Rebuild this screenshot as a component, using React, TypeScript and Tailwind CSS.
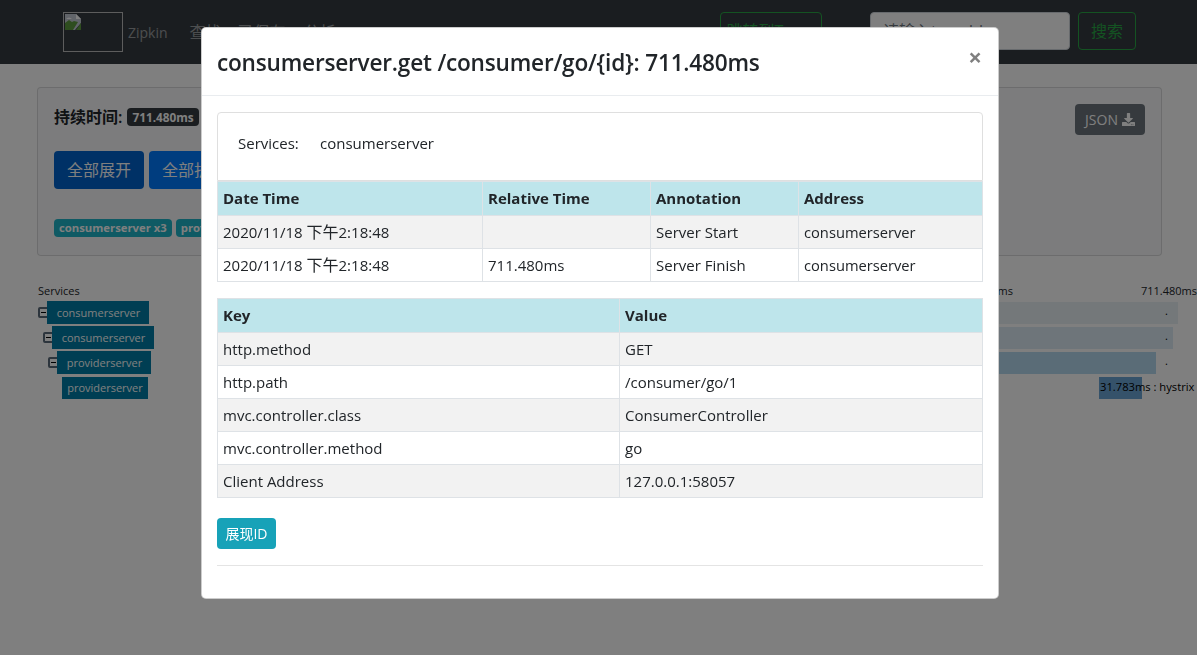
import React from 'react';
import { FaDownload } from 'react-icons/fa';

const font = "font-['Open_Sans','Noto_Sans_CJK_SC',sans-serif]";

const spanRows = [
  { name: 'consumerserver', indent: 'ml-[38px]', labelW: 'w-[102px]', barColor: 'bg-[#e8f0f5]', mr: 'mr-[19px]', dot: 'right-[10px]' },
  { name: 'consumerserver', indent: 'ml-[43px]', labelW: 'w-[102px]', barColor: 'bg-[#dceaf4]', mr: 'mr-[24px]', dot: 'right-[5px]' },
  { name: 'providerserver', indent: 'ml-[48px]', labelW: 'w-[94px]', barColor: 'bg-[#b4d8ee]', mr: 'mr-[41px]', dot: '-right-[12px]' },
];

const eventRows = [
  ['2020/11/18', '下午', '2:18:48', '', 'Server Start', 'consumerserver'],
  ['2020/11/18', '下午', '2:18:48', '711.480ms', 'Server Finish', 'consumerserver'],
];

const tagRows = [
  ['http.method', 'GET'],
  ['http.path', '/consumer/go/1'],
  ['mvc.controller.class', 'ConsumerController'],
  ['mvc.controller.method', 'go'],
  ['Client Address', '127.0.0.1:58057'],
];

const BrokenImage = () => (
  <svg width="16" height="16" viewBox="0 0 16 16" className="block">
    <path d="M0 0h11l5 5v4l-6 7H0z" fill="#c3c9d3" />
    <path d="M0 9l4-3 3 2 2-1 4 1-5 8H0z" fill="#5d9a3f" />
    <path d="M1 5c2-2 4-2 6 0z" fill="#fff" />
    <path d="M11 0v5h5z" fill="#fff" />
    <path d="M16 9v7h-5z" fill="#5d9a3f" />
  </svg>
);

const Toggle = () => (
  <span className="flex h-[11px] w-[11px] shrink-0 items-center justify-center rounded-[2px] border-2 border-[#5a6a7a]">
    <span className="h-[1px] w-[5px] bg-black"></span>
  </span>
);

const App = () => {
  return (
    <div className={`relative h-[655px] w-[1197px] overflow-hidden bg-white text-base text-[#212529] ${font}`}>
      <nav className="flex h-[64px] items-center bg-[#343a40] pl-[63px] pr-[61px]">
        <div className="h-[40px] w-[60px] border border-[#bbb] p-[1px]">
          <BrokenImage />
        </div>
        <span className="ml-[5px] text-[14px] text-white/50">Zipkin</span>
        <span className="ml-[22px] text-white/50">查找</span>
        <span className="ml-[16px] text-white/50">已保存</span>
        <span className="ml-[18px] text-white/50">分析</span>
        <button className="mb-[2px] ml-auto h-[38px] w-[102px] rounded border border-[#28a745] text-[#28a745]">跳转到Trace</button>
        <input
          className="mb-[2px] ml-[48px] h-[38px] w-[200px] rounded border border-[#ced4da] bg-white px-3 text-[#6c757d] placeholder:text-[#6c757d]"
          placeholder="请输入traceId"
        />
        <button className="mb-[2px] ml-[8px] h-[38px] w-[58px] rounded border border-[#28a745] text-[#28a745]">搜索</button>
      </nav>

      <section className="ml-[37px] mr-[35px] mt-[23px] h-[169px] rounded border border-black/[.125] bg-[#f8f9fa] px-[16px] pt-[16px]">
        <div className="flex items-start justify-between">
          <div className="mt-[1px] flex items-center gap-[4px]">
            <span className="font-semibold">持续时间:</span>
            <span className="ml-[1px] rounded-[4px] bg-[#343a40] px-[5px] py-[2px] text-[11.8px] font-bold leading-[14px] text-white">711.480ms</span>
          </div>
          <button className="flex h-[31px] w-[70px] items-center justify-center gap-[4px] rounded bg-[#6c757d] text-sm text-white">
            JSON <FaDownload className="text-[13px]" />
          </button>
        </div>
        <div className="mt-[16px] flex gap-[5px]">
          <button className="h-[38px] w-[90px] rounded bg-[#0062cc] text-white">全部展开</button>
          <button className="h-[38px] w-[90px] rounded bg-[#007bff] text-white">全部折叠</button>
        </div>
        <div className="mt-[30px] flex gap-[4px]">
          <span className="rounded-[4px] bg-[#1eb4c8] px-[5px] py-[2px] text-[11.3px] font-bold leading-[14px] text-white">consumerserver x3</span>
          <span className="rounded-[4px] bg-[#1eb4c8] px-[5px] py-[2px] text-[11.3px] font-bold leading-[14px] text-white">providerserver x1</span>
        </div>
      </section>

      <section className="mt-[26px] text-[11px]">
        <div className="flex h-[18px] items-center pl-[38px]">
          <span>Services</span>
          <span className="ml-auto mr-[128px]">ms</span>
          <span className="whitespace-nowrap">711.480ms</span>
        </div>
        <div className="mt-[1px] flex flex-col gap-[2px]">
          {spanRows.map((row, i) => (
            <div key={i} className={`flex h-[23px] items-center ${row.indent}`}>
              <Toggle />
              <span className={`-ml-[2px] flex h-[23px] items-center justify-center bg-[#007da6] pl-[1px] pt-[1px] text-white ${row.labelW}`}>{row.name}</span>
              <div className={`relative ml-auto h-[22px] w-[200px] ${row.barColor} ${row.mr}`}>
                <span className={`absolute top-[1px] text-black ${row.dot}`}>.</span>
              </div>
            </div>
          ))}
          <div className="flex h-[23px] items-center">
            <span className="ml-[62px] flex h-[22px] w-[86px] items-center justify-center bg-[#007da6] pt-[1px] text-white">providerserver</span>
            <div className="relative ml-auto mr-[55px] h-[22px] w-[43px] bg-[#6aa4d4]">
              <span className="absolute left-[1px] top-[2px] whitespace-nowrap text-[11.2px] text-black">31.783ms : hystrix</span>
            </div>
          </div>
        </div>
      </section>

      <div className="fixed inset-0 bg-black/50"></div>

      <div className="fixed left-[201px] top-[27px] h-[572px] w-[798px] rounded-[5px] border border-black/20 bg-white">
        <header className="flex h-[68px] items-center justify-between border-b border-[#e9ecef] pl-[15px] pr-[16px]">
          <h5 className="mt-[2px] text-[22.6px] font-semibold leading-[30px] tracking-[-0.2px]">consumerserver.get /consumer/go/{'{id}'}: 711.480ms</h5>
          <span className="-mt-[10px] text-[24px] font-bold leading-none text-black/50">×</span>
        </header>
        <div className="px-[15px] pt-[16px]">
          <div className="flex h-[69px] items-start rounded-t border border-[#dfdfdf] pl-[20px] pt-[19px] text-[15px]">
            <span className="w-[82px] font-medium">Services:</span>
            <span className="font-medium">consumerserver</span>
          </div>
          <table className="w-[765px] table-fixed border-collapse text-[15px]">
            <colgroup>
              <col className="w-[265px]" />
              <col className="w-[168px]" />
              <col className="w-[148px]" />
              <col className="w-[184px]" />
            </colgroup>
            <thead>
              <tr className="h-[34px] bg-[#bee5eb]">
                {['Date Time', 'Relative Time', 'Annotation', 'Address'].map((h) => (
                  <th key={h} className="border border-[#dee2e6] px-[5px] text-left font-bold">{h}</th>
                ))}
              </tr>
            </thead>
            <tbody>
              {eventRows.map((row, i) => (
                <tr key={i} className={`h-[33px] ${i % 2 === 0 ? 'bg-[#f2f2f2]' : ''}`}>
                  <td className="border border-[#dee2e6] px-[5px]">
                    {row[0]} <span className="text-[16px]">{row[1]}</span>{row[2]}
                  </td>
                  <td className="border border-[#dee2e6] px-[5px]">{row[3]}</td>
                  <td className="border border-[#dee2e6] px-[5px]">{row[4]}</td>
                  <td className="border border-[#dee2e6] px-[5px] text-[14.7px]">{row[5]}</td>
                </tr>
              ))}
            </tbody>
          </table>
          <table className="mt-[16px] w-[765px] table-fixed border-collapse text-[15px]">
            <colgroup>
              <col className="w-[402px]" />
              <col className="w-[363px]" />
            </colgroup>
            <thead>
              <tr className="h-[34px] bg-[#bee5eb]">
                <th className="border border-[#dee2e6] px-[5px] text-left font-bold">Key</th>
                <th className="border border-[#dee2e6] px-[5px] text-left font-bold">Value</th>
              </tr>
            </thead>
            <tbody>
              {tagRows.map((row, i) => (
                <tr key={i} className={`h-[33px] ${i % 2 === 0 ? 'bg-[#f2f2f2]' : ''}`}>
                  <td className="border border-[#dee2e6] px-[5px]">{row[0]}</td>
                  <td className="border border-[#dee2e6] px-[5px]">{row[1]}</td>
                </tr>
              ))}
            </tbody>
          </table>
          <button className="mt-[20px] block h-[31px] w-[59px] rounded bg-[#17a2b8] text-sm text-white">展现ID</button>
          <hr className="mt-[16px] border-[#e4e4e4]" />
        </div>
      </div>
    </div>
  );
};

export default App;
